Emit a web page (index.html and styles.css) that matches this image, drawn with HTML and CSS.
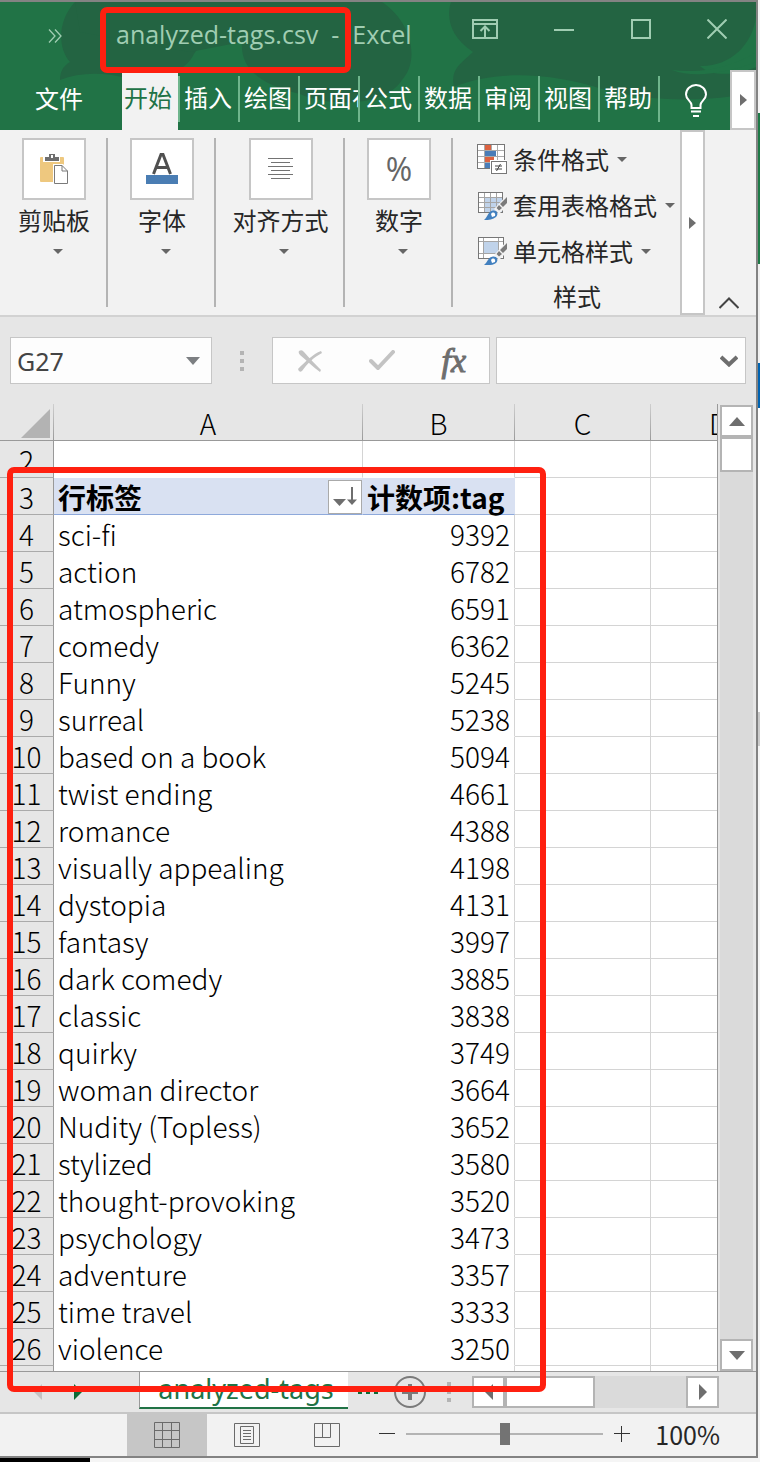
FILE: index.html
```html
<!DOCTYPE html>
<html lang="zh-CN">
<head>
<meta charset="utf-8">
<title>analyzed-tags.csv - Excel</title>
<link rel="stylesheet" href="styles.css">
</head>
<body>
<div class="window">
  <header class="chrome">
    <svg class="chrome-art" viewBox="0 0 756 128" preserveAspectRatio="none" aria-hidden="true">
      <path d="M75 0C58 18 57 45 70 60C63 64 60 70 60 78C80 70 105 70 130 77C160 80 185 70 194 52C215 20 270 0 300 0Z" fill="#236442"/>
      <path d="M75 0H382C412 20 420 58 402 78C385 105 330 105 300 92C258 82 240 65 242 40L190 50L80 30Z" fill="#236442"/>
      <path d="M451 0H756C760 35 735 65 700 64C715 78 745 70 756 65V90C700 102 645 98 605 88C550 70 495 68 454 85C450 68 460 62 473 50C450 35 446 15 451 0Z" fill="#236442"/>
      <path d="M672 68C705 72 735 64 756 50V60C730 70 695 77 672 68Z" fill="#217346"/>
    </svg>
    <div class="titlebar">
      <button class="plain more" aria-label="更多命令">
        <svg width="14" height="14" viewBox="0 0 14 14"><path d="M1 0.5L7 7L1 13.5M7 0.5L13 7L7 13.5" fill="none" stroke="#a0cdb2" stroke-width="1.3"/></svg>
      </button>
      <h1 class="title"><span class="title-file">analyzed-tags.csv</span><span class="title-dash">-</span><span>Excel</span></h1>
      <div class="win-controls">
        <button class="plain" aria-label="功能区显示选项">
          <svg width="26" height="20" viewBox="0 0 26 20"><path d="M1 1H25V19H1ZM1 5H25M13 18V8M8.500 12L13 7.500L17.500 12" fill="none" stroke="#a0cdb2" stroke-width="2"/></svg>
        </button>
        <button class="plain" aria-label="最小化">
          <svg width="20" height="20" viewBox="0 0 20 20"><path d="M0 11H20" stroke="#a0cdb2" stroke-width="2"/></svg>
        </button>
        <button class="plain" aria-label="最大化">
          <svg width="20" height="20" viewBox="0 0 20 20"><path d="M1 1H19V19H1Z" fill="none" stroke="#a0cdb2" stroke-width="2"/></svg>
        </button>
        <button class="plain" aria-label="关闭">
          <svg width="20" height="20" viewBox="0 0 20 20"><path d="M0.500 0.500L19.500 19.500M19.500 0.500L0.500 19.500" stroke="#a0cdb2" stroke-width="2"/></svg>
        </button>
      </div>
    </div>
    <nav class="tabs">
      <button class="plain tab-file">文件</button>
      <button class="plain tab tab-active"><span>开始</span></button>
      <button class="plain tab"><span>插入</span></button>
      <button class="plain tab"><span>绘图</span></button>
      <button class="plain tab"><span>页面布局</span></button>
      <button class="plain tab"><span>公式</span></button>
      <button class="plain tab"><span>数据</span></button>
      <button class="plain tab"><span>审阅</span></button>
      <button class="plain tab"><span>视图</span></button>
      <button class="plain tab"><span>帮助</span></button>
      <button class="plain tell-me" aria-label="告诉我">
        <svg width="24" height="34" viewBox="0 0 24 34"><path d="M7.500 24V21C7.500 17 2 16 2 10.500A10 9.500 0 0 1 22 10.500C22 16 16.500 17 16.500 21V24ZM7 27.500H17M9 32H15" fill="none" stroke="#fff" stroke-width="2"/></svg>
      </button>
      <button class="plain tabs-next" aria-label="后面的选项卡"><svg width="7" height="12" viewBox="0 0 7 12"><path d="M0 0L7 6L0 12Z" fill="#6e6e6e"/></svg></button>
    </nav>
    <div class="mark mark-title"></div>
  </header>

  <section class="ribbon">
    <button class="plain group">
      <span class="tile"><svg width="30" height="32" viewBox="0 0 30 32"><rect x="1" y="4" width="24" height="25" rx="1" fill="#eec87f"/><path d="M5 4V8H20V4" fill="none" stroke="#fff" stroke-width="2"/><path d="M6 8V4H10V1H16V4H20V8Z" fill="#6e6e6e"/><rect x="12" y="2" width="2" height="3" fill="#fff"/><path d="M14 11H24L30 17V32H14Z" fill="#fff"/><path d="M15.500 12.500H23L28.500 18V30.500H15.500ZM23 12.500V18H28.500" fill="#fff" stroke="#7a7a7a"/></svg></span>
      <span class="label">剪贴板</span><i class="caret"></i>
    </button>
    <button class="plain group">
      <span class="tile"><svg width="32" height="32" viewBox="0 0 32 32"><path d="M7.500 21L15 1.500H17L24.500 21M10 14.500H22" fill="none" stroke="#505050" stroke-width="3"/><rect y="22" width="32" height="9" fill="#4a7db3"/></svg></span>
      <span class="label">字体</span><i class="caret"></i>
    </button>
    <button class="plain group group-wide">
      <span class="tile"><svg width="26" height="24" viewBox="0 0 26 24"><path d="M0 1.500H25M3 5.500H22M0 9.500H25M3 13.500H22M0 17.500H25M3 21.500H22" stroke="#737373"/></svg></span>
      <span class="label">对齐方式</span><i class="caret"></i>
    </button>
    <button class="plain group">
      <span class="tile percent">%</span>
      <span class="label">数字</span><i class="caret"></i>
    </button>
    <div class="styles">
      <button class="plain style-item">
        <svg width="30" height="30" viewBox="0 0 30 30"><rect x="0.500" y="0.500" width="27" height="24" fill="#fff" stroke="#777"/><path d="M1 6.500H27M1 12.500H27M1 18.500H27M7.500 1V24M14.500 1V24M20.500 1V24" stroke="#aaa"/><path d="M8 1H14V6H8ZM8 13H17V18H8Z" fill="#dc6240"/><path d="M8 7H19V12H8ZM8 19H14V24H8Z" fill="#4a7db8"/><rect x="13" y="16" width="17" height="14" fill="#fff"/><rect x="14.500" y="17.500" width="15" height="12" fill="#fff" stroke="#777"/><path d="M18 22H25M18 25H25M23.500 20L19.500 27" stroke="#444"/></svg>
        <span>条件格式</span><i class="caret"></i>
      </button>
      <button class="plain style-item">
        <svg width="30" height="30" viewBox="0 0 30 30"><rect x="1.500" y="2.500" width="24" height="20" fill="#fff"/><rect x="8" y="8" width="17" height="14" fill="#c0d3ea"/><path d="M1 7.500H25M1 12.500H25M1 17.500H25M7.500 2V22M13.500 2V22M19.500 2V22" stroke="#a5a5a5"/><rect x="1.500" y="2.500" width="24" height="20" fill="none" stroke="#777"/><path d="M30 5L17 19L22 24L30 16Z" fill="#f2f2f2"/><path d="M30 7L23 14L26 17L30 13ZM22 15L19.500 18L22 20.500L25 18Z" fill="#7b7b7b"/><path d="M7 30C11 27 11 21 16 20.500C20 20 22 24 19 27C16 29.500 12 30 7 30Z" fill="#4280bf"/><path d="M14 24C16 21 19 23 18 26L15 27Z" fill="#fff"/></svg>
        <span>套用表格格式</span><i class="caret"></i>
      </button>
      <button class="plain style-item">
        <svg width="30" height="30" viewBox="0 0 30 30"><rect x="1.500" y="1.500" width="25" height="21" fill="#fff"/><path d="M1 5.500H26M1 17.500H26M6.500 2V22M21.500 2V22" stroke="#a5a5a5"/><rect x="7" y="6" width="14" height="11" fill="#c0d3ea"/><rect x="1.500" y="1.500" width="25" height="21" fill="none" stroke="#777"/><path d="M30 5L17 19L22 24L30 16Z" fill="#f2f2f2"/><path d="M30 7L23 14L26 17L30 13ZM22 15L19.500 18L22 20.500L25 18Z" fill="#7b7b7b"/><path d="M7 29C11 26 11 21 16 20.500C20 20 22 24 19 27C16 29.500 12 29 7 29Z" fill="#4280bf"/><path d="M14 24C16 21 19 23 18 26L15 27Z" fill="#fff"/></svg>
        <span>单元格样式</span><i class="caret"></i>
      </button>
      <div class="styles-label">样式</div>
    </div>
    <button class="plain ribbon-next" aria-label="向右滚动"><svg width="7" height="12" viewBox="0 0 7 12"><path d="M0 0L7 6L0 12Z" fill="#6e6e6e"/></svg></button>
    <button class="plain collapse" aria-label="折叠功能区"><svg width="20" height="12" viewBox="0 0 20 12"><path d="M0.500 11L10 1.500L19.500 11" fill="none" stroke="#444" stroke-width="2"/></svg></button>
  </section>

  <section class="formula">
    <div class="name-box">
      <input class="name-input" value="G27" aria-label="名称框">
      <svg width="14" height="8" viewBox="0 0 14 8"><path d="M0 0H14L7 8Z" fill="#7c7f82"/></svg>
    </div>
    <div class="dots"><i></i><i></i><i></i></div>
    <div class="fx-box">
      <button class="plain" aria-label="取消"><svg width="24" height="22" viewBox="0 0 24 22"><path d="M0 19C7 12 15 4 23 1L24 3C16 7 9 14 4 21Q1 23 0 19Z" fill="#c3c3c3"/><path d="M1 1Q4 -1 6 2C12 9 18 15 23 20L22 22C15 17 8 10 2 5Q0 3 1 1Z" fill="#c3c3c3"/></svg></button>
      <button class="plain" aria-label="输入"><svg width="26" height="22" viewBox="0 0 26 22"><path d="M2 11L9 18L24 2" fill="none" stroke="#c3c3c3" stroke-width="4" stroke-linecap="round" stroke-linejoin="round"/></svg></button>
      <button class="plain fx" aria-label="插入函数">fx</button>
    </div>
    <div class="formula-box">
      <input class="formula-input" aria-label="编辑栏">
      <svg width="18" height="12" viewBox="0 0 18 12"><path d="M1 2L9 9.500L17 2" fill="none" stroke="#6e6e6e" stroke-width="4"/></svg>
    </div>
  </section>

  <main class="sheet">
    <table class="grid">
      <colgroup><col class="c-num"><col class="c-a"><col class="c-b"><col class="c-c"><col></colgroup>
      <thead><tr><th class="corner" aria-label="全选"><svg width="29" height="29" viewBox="0 0 29 29"><path d="M29 0V29H0Z" fill="#b3b3b3"/></svg></th><th>A</th><th>B</th><th>C</th><th class="cut"><span>D</span></th></tr></thead>
      <tbody>
        <tr class="blank"><th>2</th><td></td><td></td><td></td><td></td></tr>
        <tr class="pivot"><th>3</th><td><div class="pivot-cell"><span>行标签</span><button class="plain sort" aria-label="排序和筛选"><svg width="24" height="20" viewBox="0 0 24 20"><path d="M0 12H13L6.500 19Z" fill="#6e6e6e"/><path d="M19 0V16" stroke="#6e6e6e" stroke-width="2"/><path d="M14 12.500H24L19 18Z" fill="#6e6e6e"/></svg></button></div></td><td class="pivot-count">计数项:tag</td><td></td><td></td></tr>
        <tr><th>4</th><td>sci-fi</td><td>9392</td><td></td><td></td></tr>
        <tr><th>5</th><td>action</td><td>6782</td><td></td><td></td></tr>
        <tr><th>6</th><td>atmospheric</td><td>6591</td><td></td><td></td></tr>
        <tr><th>7</th><td>comedy</td><td>6362</td><td></td><td></td></tr>
        <tr><th>8</th><td>Funny</td><td>5245</td><td></td><td></td></tr>
        <tr><th>9</th><td>surreal</td><td>5238</td><td></td><td></td></tr>
        <tr><th>10</th><td>based on a book</td><td>5094</td><td></td><td></td></tr>
        <tr><th>11</th><td>twist ending</td><td>4661</td><td></td><td></td></tr>
        <tr><th>12</th><td>romance</td><td>4388</td><td></td><td></td></tr>
        <tr><th>13</th><td>visually appealing</td><td>4198</td><td></td><td></td></tr>
        <tr><th>14</th><td>dystopia</td><td>4131</td><td></td><td></td></tr>
        <tr><th>15</th><td>fantasy</td><td>3997</td><td></td><td></td></tr>
        <tr><th>16</th><td>dark comedy</td><td>3885</td><td></td><td></td></tr>
        <tr><th>17</th><td>classic</td><td>3838</td><td></td><td></td></tr>
        <tr><th>18</th><td>quirky</td><td>3749</td><td></td><td></td></tr>
        <tr><th>19</th><td>woman director</td><td>3664</td><td></td><td></td></tr>
        <tr><th>20</th><td>Nudity (Topless)</td><td>3652</td><td></td><td></td></tr>
        <tr><th>21</th><td>stylized</td><td>3580</td><td></td><td></td></tr>
        <tr><th>22</th><td>thought-provoking</td><td>3520</td><td></td><td></td></tr>
        <tr><th>23</th><td>psychology</td><td>3473</td><td></td><td></td></tr>
        <tr><th>24</th><td>adventure</td><td>3357</td><td></td><td></td></tr>
        <tr><th>25</th><td>time travel</td><td>3333</td><td></td><td></td></tr>
        <tr><th>26</th><td>violence</td><td>3250</td><td></td><td></td></tr>
        <tr class="sliver"><th></th><td></td><td></td><td></td><td></td></tr>
      </tbody>
    </table>
    <div class="vscroll">
      <button class="plain scroll-btn" aria-label="向上滚动"><svg width="16" height="9" viewBox="0 0 16 9"><path d="M0 9L8 0L16 9Z" fill="#6e6e6e"/></svg></button>
      <div class="vthumb"></div>
      <button class="plain scroll-btn vdown" aria-label="向下滚动"><svg width="16" height="9" viewBox="0 0 16 9"><path d="M0 0H16L8 9Z" fill="#6e6e6e"/></svg></button>
    </div>
    <div class="mark mark-sheet"></div>
  </main>

  <section class="sheet-tabs">
    <div class="tab-nav">
      <button class="plain" aria-label="上一个工作表"><svg width="8" height="16" viewBox="0 0 8 16"><path d="M8 0V16L0 8Z" fill="#c3c3c3"/></svg></button>
      <button class="plain" aria-label="下一个工作表"><svg width="8" height="16" viewBox="0 0 8 16"><path d="M0 0V16L8 8Z" fill="#0e6b37"/></svg></button>
    </div>
    <button class="plain sheet-tab">analyzed-tags</button>
    <div class="sheet-tools">
      <button class="plain ellipsis" aria-label="更多工作表"><i></i><i></i><i></i></button>
      <button class="plain" aria-label="新工作表"><svg width="32" height="32" viewBox="0 0 32 32"><circle cx="16" cy="16" r="15" fill="none" stroke="#7a7a7a" stroke-width="2"/><path d="M16 8V24M8 16H24" stroke="#7a7a7a" stroke-width="4"/></svg></button>
      <div class="dots dots-small"><i></i><i></i><i></i></div>
      <div class="hscroll">
        <button class="plain scroll-btn" aria-label="向左滚动"><svg width="8" height="16" viewBox="0 0 8 16"><path d="M8 0V16L0 8Z" fill="#6e6e6e"/></svg></button>
        <div class="hthumb"></div>
        <button class="plain scroll-btn hright" aria-label="向右滚动"><svg width="8" height="16" viewBox="0 0 8 16"><path d="M0 0V16L8 8Z" fill="#6e6e6e"/></svg></button>
      </div>
    </div>
  </section>

  <footer class="status">
    <button class="plain view view-active" aria-label="普通"><svg width="26" height="26" viewBox="0 0 26 26"><path d="M0.500 0.500H25.500V25.500H0.500ZM0.500 8.500H25.500M0.500 17.500H25.500M8.500 0.500V25.500M17.500 0.500V25.500" fill="none" stroke="#6a6a6a"/></svg></button>
    <button class="plain view" aria-label="页面布局"><svg width="26" height="24" viewBox="0 0 26 24"><path d="M0.500 0.500H25.500V23.500H0.500ZM6.500 3.500H19.500V20.500H6.500ZM9 7.500H17M9 10.500H17M9 13.500H17M9 16.500H17" fill="none" stroke="#6a6a6a"/></svg></button>
    <button class="plain view" aria-label="分页预览"><svg width="26" height="24" viewBox="0 0 26 24"><path d="M0.500 0.500H25.500V23.500H0.500ZM0.500 14.500H16.500V0.500M8.500 0.500V14.500" fill="none" stroke="#6a6a6a"/></svg></button>
    <div class="zoom">
      <button class="plain" aria-label="缩小"><svg width="16" height="16" viewBox="0 0 16 16"><path d="M0 7.500H16" stroke="#333"/></svg></button>
      <input class="zoom-range" type="range" min="0" max="200" value="100" aria-label="缩放">
      <button class="plain" aria-label="放大"><svg width="16" height="16" viewBox="0 0 16 16"><path d="M0 7.500H16M7.500 0V16" stroke="#333"/></svg></button>
      <span class="zoom-value">100%</span>
    </div>
  </footer>
</div>
</body>
</html>
```

FILE: styles.css
```css
* { box-sizing: border-box; }

body {
  margin: 0;
  padding: 0 2px 4px 0;
  background:
    linear-gradient(#000, #000) 0 100% / 90px 4px no-repeat,
    linear-gradient(#f4f4f4 113px, #1e7a47 113px 264px, #f0f0f0 264px 363px, #0063b1 363px 408px, #fff 408px 712px, #ccc 712px 746px, #f5f5f5 746px);
  font-family: "Noto Sans", "Noto Sans CJK SC", sans-serif;
  color: #262626;
}

svg { display: block; flex: none; }

.plain {
  margin: 0;
  padding: 0;
  border: 0;
  background: none;
  color: inherit;
  font: inherit;
  display: flex;
  align-items: center;
  justify-content: center;
}

.window {
  border: 2px solid #838383;
  border-left: 0;
  background: #e6e6e6;
}

/* Title bar and tabs */
.chrome { position: relative; background: #217346; color: #fff; }
.chrome-art { position: absolute; top: 0; left: 0; width: 100%; height: 100%; }
.titlebar { position: relative; display: flex; height: 70px; padding: 0 29px 0 48px; color: #a0cdb2; }
.more { height: 68px; }
.title { display: flex; margin: 0 0 0 54px; font: 25px/64px "Open Sans", "Noto Sans", sans-serif; }
.title-dash { padding: 0 13px; }
.win-controls { display: flex; justify-content: space-between; width: 255px; height: 54px; margin-left: auto; }

.tabs { position: relative; display: flex; height: 58px; font-size: 24px; font-family: "Noto Sans CJK SC", sans-serif; }
.tab-file { width: 118px; margin-right: 4px; padding-bottom: 8px; }
.tab { width: 60px; overflow: hidden; justify-content: flex-start; white-space: nowrap; text-align: left; }
.tab span { width: 58px; height: 58px; padding-left: 4px; line-height: 50px; overflow: hidden; }
.tab-active span { width: 56px; padding-left: 2px; background: #f2f2f2; color: #217346; }
.tab-active { width: 58px; }
.tab::after { content: ""; flex: none; width: 2px; height: 46px; margin-bottom: 4px; background: #6fb58c; }
.tell-me { flex: 1; padding-left: 2px; }
.tabs-next { width: 26px; height: 60px; margin-top: -2px; border: 2px solid #c6c6c6; background: #fff; }

/* Ribbon */
.ribbon { display: flex; padding-right: 17px; border-bottom: 2px solid #d2d2d2; background: #f2f2f2; font: 24px/32px "Noto Sans CJK SC", sans-serif; }
.group { flex-direction: column; justify-content: flex-start; width: 108px; margin: 8px 0; padding-left: 2px; border-right: 2px solid #b4b4b4; }
.group-wide { width: 129px; }
.tile { display: flex; align-items: center; justify-content: center; width: 64px; height: 62px; border: 2px solid #c6c6c6; background: #fff; }
.percent { color: #666; font-family: "Open Sans", sans-serif; font-size: 32px; }
.label { padding: 4px 0 13px; }
.caret { flex: none; border: 5px solid transparent; border-top-color: #666; border-bottom: 0; }
.group .caret { margin-left: 7px; }
.styles { flex: 1; padding: 6px 0 0 24px; }
.style-item { height: 46px; white-space: nowrap; }
.style-item span { padding: 0 8px 0 6px; }
.styles-label { padding: 6px 0 3px 76px; }
.ribbon-next { width: 25px; border: 2px solid #c6c6c6; background: #fff; }
.collapse { align-items: flex-end; margin-left: 14px; padding-bottom: 6px; }

/* Formula bar */
.formula { display: flex; padding: 20px 10px; }
.name-box, .fx-box, .formula-box { display: flex; flex: none; align-items: center; height: 47px; border: 1px solid #c6c6c6; background: #fdfdfd; }
.name-box { width: 202px; padding-right: 11px; }
.name-input, .formula-input { flex: 1; min-width: 0; padding: 0 6px; border: 0; background: none; color: #444; font: 25px "Noto Sans", sans-serif; }
.dots { display: flex; flex: none; flex-direction: column; justify-content: center; gap: 4px; width: 60px; align-items: center; }
.dots i, .ellipsis i { width: 4px; height: 4px; background: #b4b4b4; }
.fx-box { justify-content: space-between; width: 218px; padding: 0 23px 0 25px; margin-right: 6px; }
.fx { color: #6e6e6e; font: italic 34px/40px "Liberation Serif", serif; -webkit-text-stroke: 1px #6e6e6e; }
.formula-box { flex: 1; min-width: 0; padding-right: 7px; }

/* Worksheet */
.sheet { position: relative; display: flex; border-bottom: 1px solid #999; }
.grid { flex: 1; width: 0; table-layout: fixed; border-collapse: separate; border-spacing: 0; border-right: 1px solid #999; color: #000; font: 300 28px/34px "Noto Sans CJK SC", sans-serif; }
.c-num { width: 54px; }
.c-a { width: 309px; }
.c-b { width: 152px; }
.c-c { width: 136px; }
.grid th, .grid td { height: 37px; padding: 2px 0 0; font-weight: 300; white-space: nowrap; }
.grid thead th { border-right: 1px solid; border-bottom: 1px solid #999; border-image: linear-gradient(#d0d0d0, #999) 1; border-top: 0; border-left: 0; }
.grid .cut { overflow: hidden; border-right: 0; text-align: left; }
.cut span { padding-left: 58px; }
.corner svg { margin-left: 21px; }
.grid tbody th { border-right: 1px solid #999; border-bottom: 1px solid #aaa; background: #e6e6e6; }
.grid td { border-right: 1px solid #d4d4d4; border-bottom: 1px solid #d4d4d4; background: #fff; }
.grid td:last-child { border-right: 0; }
.grid td:nth-child(2) { padding-left: 4px; border-right-color: #fff; border-bottom-color: #fff; }
.grid td:nth-child(3) { padding-right: 4px; border-bottom-color: #fff; text-align: right; }
.grid .blank td:nth-child(2) { border-right-color: #d4d4d4; }
.grid .pivot td:nth-child(2), .grid .pivot td:nth-child(3) { border-right-color: #d9e1f2; border-bottom-color: #8ea9db; background: #d9e1f2; font-weight: 700; text-align: left; }
.grid .pivot .pivot-count { padding-left: 4px; }
.pivot-cell { display: flex; justify-content: space-between; align-items: center; height: 34px; }
.sort { width: 34px; height: 34px; border: 1px solid #aaa; background: #fff; }
.grid .sliver th, .grid .sliver td { height: 5px; padding: 0; border-bottom: 0; line-height: 0; }

.vscroll { display: flex; flex-direction: column; width: 33px; margin: 1px 3px 0 2px; background: #dadada; }
.scroll-btn { flex: none; width: 33px; height: 32px; border: 2px solid #b4b4b4; background: #fff; }
.vthumb { height: 35px; border: 2px solid #b4b4b4; background: #fff; }
.vdown { margin-top: auto; }

/* Sheet tabs */
.sheet-tabs { display: flex; height: 42px; border-bottom: 2px solid #c6c6c6; }
.tab-nav { display: flex; align-items: center; gap: 32px; width: 139px; padding-left: 34px; }
.sheet-tab { align-items: flex-start; width: 209px; height: 37px; padding-left: 4px; border-left: 1px solid #999; border-bottom: 2px solid #217346; background: #fff; color: #217346; font: 27px/34px "Noto Sans", sans-serif; }
.sheet-tools { display: flex; flex: 1; align-items: center; padding: 0 37px 0 10px; }
.ellipsis { gap: 4px; margin-right: 16px; }
.ellipsis i { background: #0e6b37; }
.dots-small { width: 46px; }
.hscroll { display: flex; flex: 1; background: #dadada; }
.hthumb { width: 90px; border: 2px solid #b4b4b4; background: #fff; }
.hright { margin-left: auto; }

/* Status bar */
.status { display: flex; height: 42px; padding-left: 127px; background: #f2f2f2; }
.view { width: 80px; }
.view-active { background: #c6c6c6; }
.zoom { display: flex; flex: 1; align-items: center; padding: 0 36px 2px 12px; }
.zoom-range { flex: 1; min-width: 0; height: 22px; margin: 0 11px; appearance: none; background: linear-gradient(#b4b4b4, #b4b4b4) center / 100% 2px no-repeat; }
.zoom-range::-webkit-slider-thumb { appearance: none; width: 10px; height: 22px; background: #737373; }
.zoom-value { margin-left: 25px; font: 25px/40px "Noto Sans CJK SC", sans-serif; }

/* Highlight frames */
.mark { position: absolute; border: 6px solid #ff2010; border-radius: 7px; pointer-events: none; }
.mark-title { left: 100px; top: 5px; width: 251px; height: 66px; }
.mark-sheet { left: 7px; top: 63px; bottom: -21px; width: 539px; }
```
